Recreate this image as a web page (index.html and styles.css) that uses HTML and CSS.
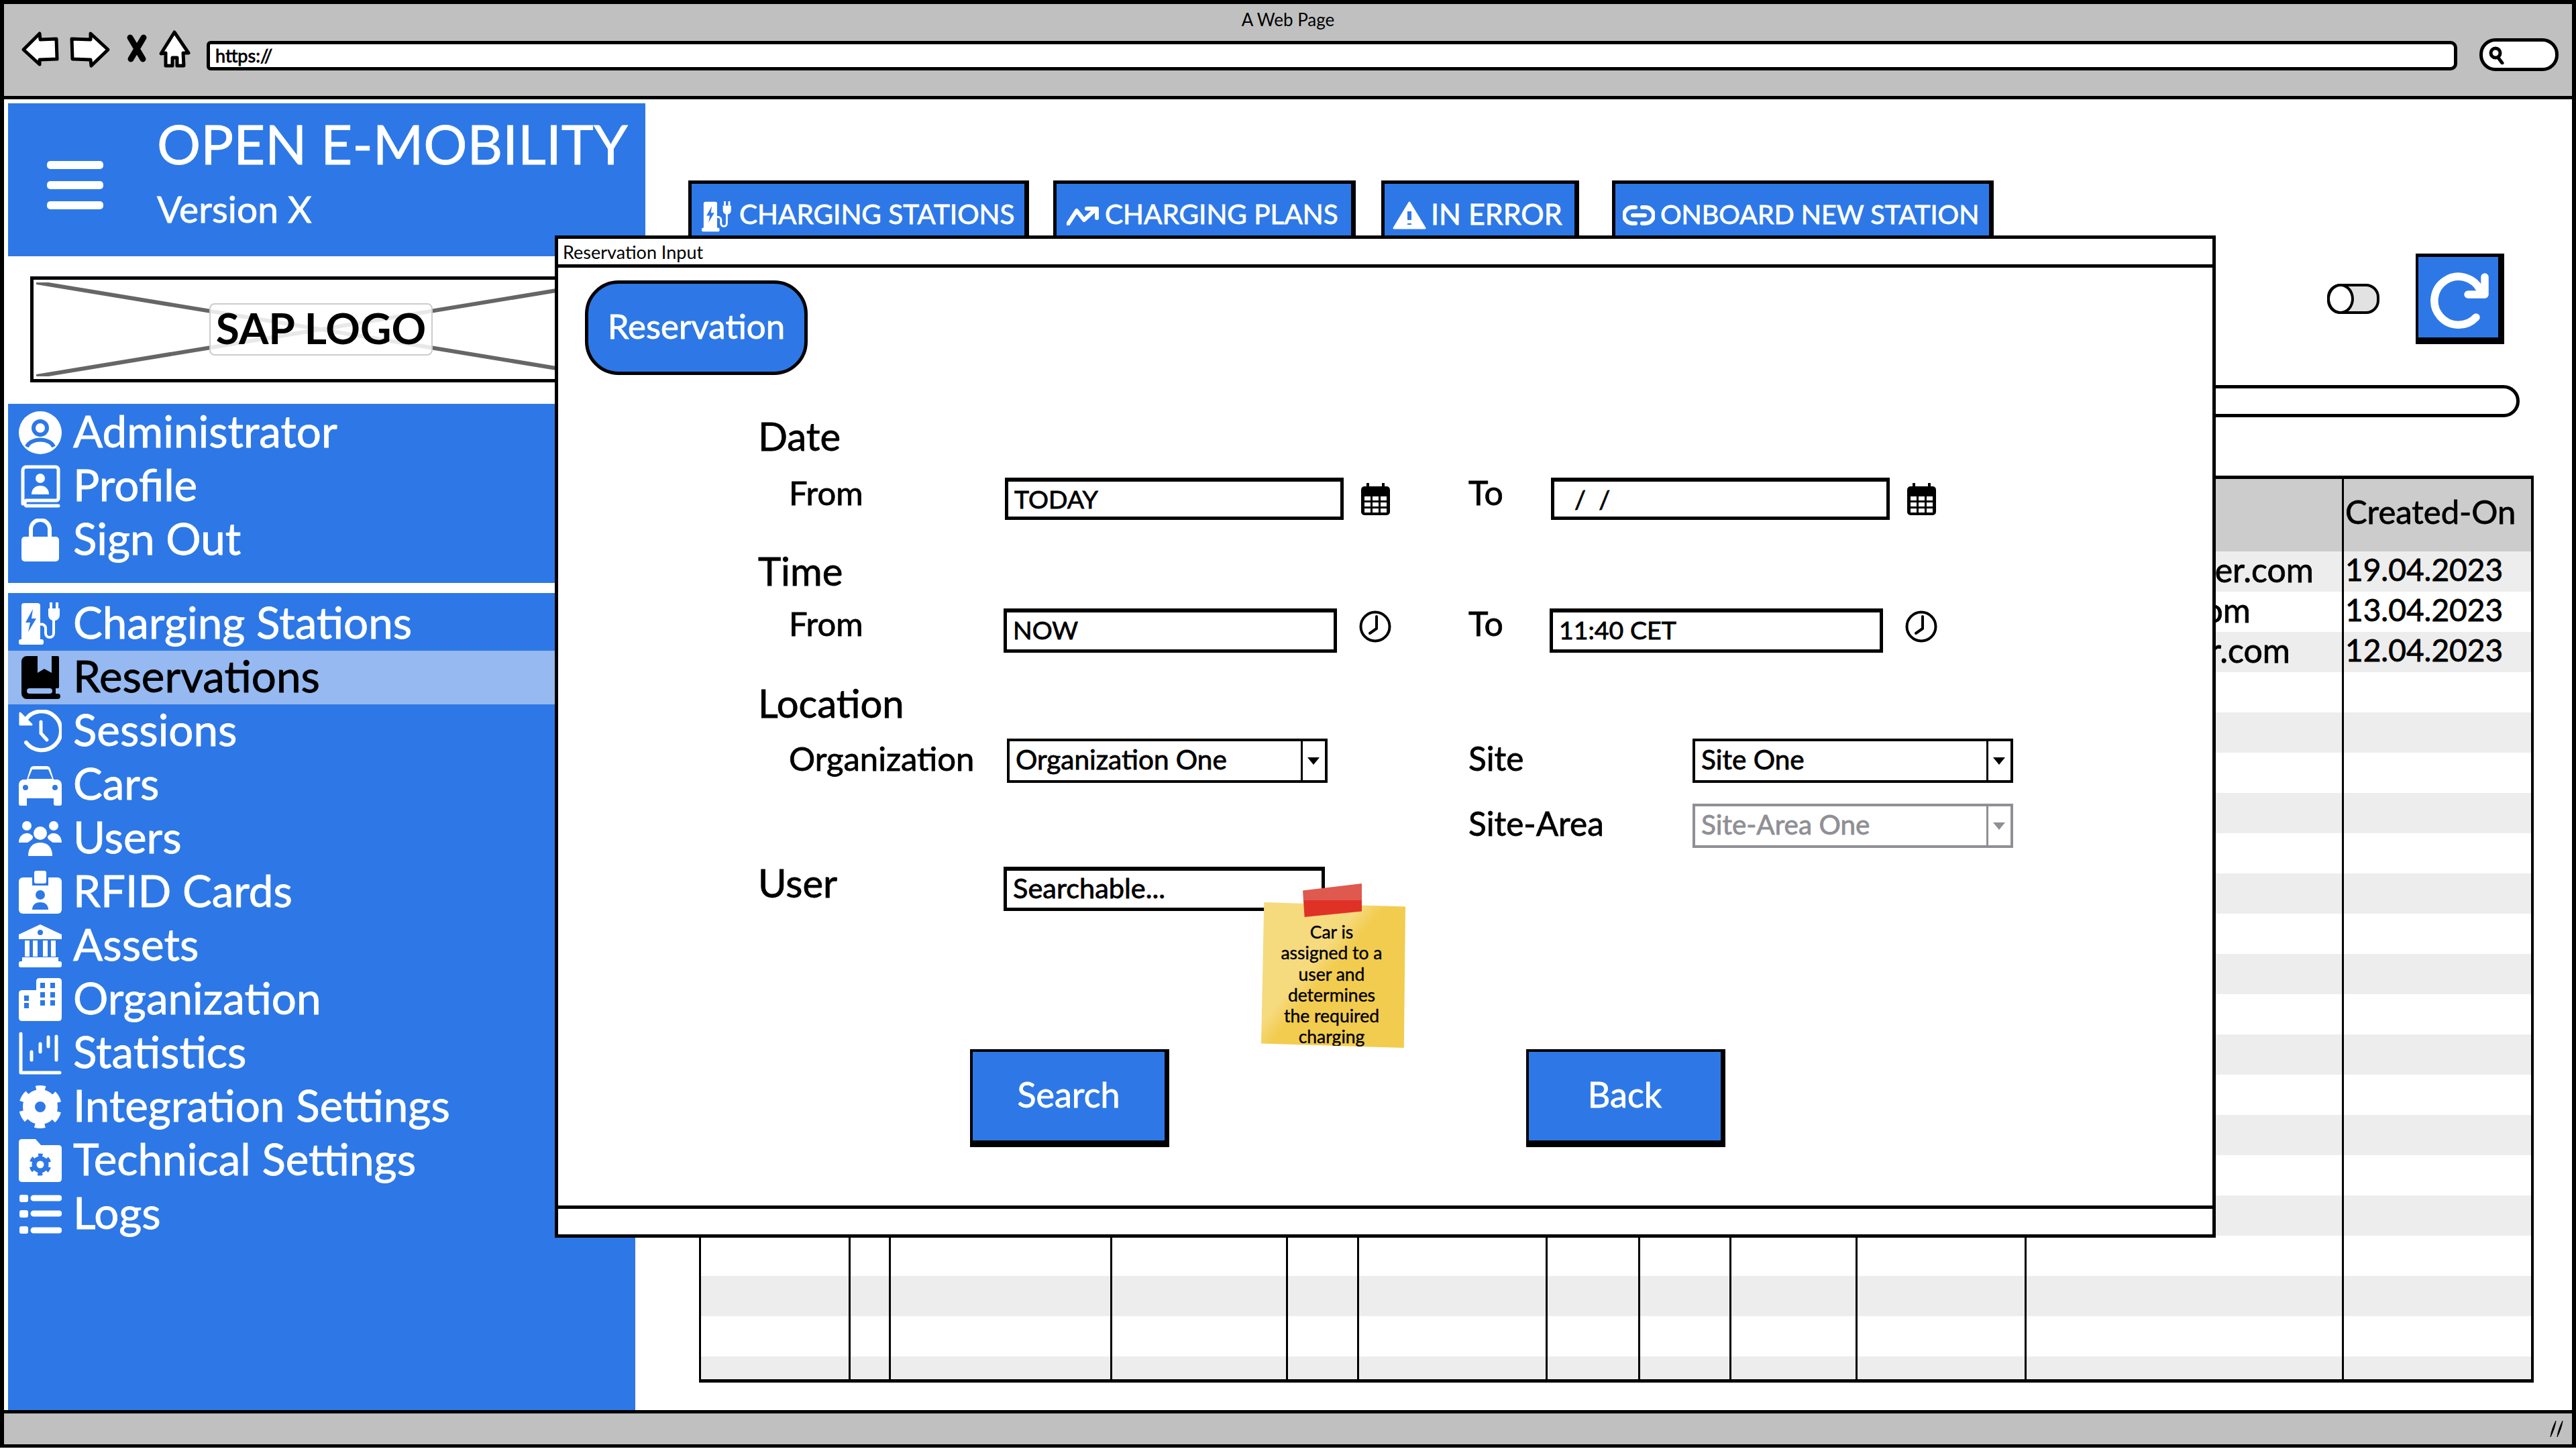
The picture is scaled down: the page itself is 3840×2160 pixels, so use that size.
FILE: index.html
```html
<!DOCTYPE html>
<html lang="en">
<head>
    <meta charset="UTF-8">
    <title>Reservation Input</title>
    <link rel="stylesheet" href="styles.css">
</head>
<body>
    <svg class="icon-defs" aria-hidden="true">
        <symbol id="i-user" viewBox="0 0 64 64">
            <circle cx="32" cy="32" r="32" fill="currentColor"/>
            <circle class="cut-line" cx="32" cy="25" r="10" stroke-width="6"/>
            <path class="cut-line" d="M12 53C18 39 46 39 52 53" stroke-width="6"/>
        </symbol>
        <symbol id="i-profile" viewBox="0 0 64 64">
            <path d="M11 3h44a4 4 0 0 1 4 4v43a3 3 0 0 1-3 3H11a5 5 0 0 0 0 8h48M6 58V8a5 5 0 0 1 5-5" fill="none" stroke="currentColor" stroke-width="5" stroke-linecap="round"/>
            <circle cx="32" cy="20" r="7" fill="currentColor"/>
            <path d="M19 44c0-9 6-13 13-13s13 4 13 13z" fill="currentColor"/>
        </symbol>
        <symbol id="i-lock" viewBox="0 0 64 64">
            <path d="M18 28V16a14 14 0 0 1 28 0v12" fill="none" stroke="currentColor" stroke-width="6"/>
            <rect x="4" y="27" width="56" height="37" rx="5" fill="currentColor"/>
        </symbol>
        <symbol id="i-station" viewBox="0 0 64 64">
            <path d="M8 1h20a4 4 0 0 1 4 4v51H4V5a4 4 0 0 1 4-4z" fill="currentColor"/>
            <rect x="0" y="55" width="37" height="8" rx="3" fill="currentColor"/>
            <path class="cut" d="M21 10L10 30h7l-3 14 12-20h-7z"/>
            <path d="M48 0v9M57 0v9" stroke="currentColor" stroke-width="4"/>
            <path d="M44 9h17v10a8 8 0 0 1-17 0z" fill="currentColor"/>
            <path d="M52 24v22a6 6 0 0 1-12 0v-8a6 6 0 0 0-8-5" fill="none" stroke="currentColor" stroke-width="4"/>
        </symbol>
        <symbol id="i-book" viewBox="0 0 64 64">
            <path d="M12 0H58a2 2 0 0 1 2 2V46a2 2 0 0 1-2 2H55V56H58a4 4 0 0 1 0 8H12A8 8 0 0 1 4 56V8A8 8 0 0 1 12 0z" fill="currentColor"/>
            <path class="cut-light" d="M28 0V25L38 19 49 25V0z"/>
            <rect class="cut-light" x="12" y="48" width="38" height="8" rx="4"/>
        </symbol>
        <symbol id="i-history" viewBox="0 0 64 64">
            <path d="M10 15A29 29 0 1 1 11 49" fill="none" stroke="currentColor" stroke-width="6" stroke-linecap="round"/>
            <path d="M2 5V22H19z" fill="currentColor" stroke="currentColor" stroke-width="3" stroke-linejoin="round"/>
            <path d="M33 18V35L42 45" fill="none" stroke="currentColor" stroke-width="5" stroke-linecap="round"/>
        </symbol>
        <symbol id="i-car" viewBox="0 0 64 64">
            <path d="M12 24L17 8Q18 4 23 4H41Q46 4 47 8L52 24H58Q64 26 64 32V52H52V60Q52 63 49 63H3Q0 63 0 60V32Q0 26 6 24z" fill="currentColor"/>
            <rect x="12" y="52" width="40" height="12" class="cut"/>
            <rect x="52" y="50" width="12" height="13" rx="3" fill="currentColor"/>
            <path class="cut" d="M14 23L20 9H44L50 23z"/>
            <circle class="cut" cx="10" cy="36" r="4"/>
            <circle class="cut" cx="54" cy="36" r="4"/>
        </symbol>
        <symbol id="i-users" viewBox="0 0 64 64">
            <circle cx="12" cy="13" r="7" fill="currentColor"/>
            <circle cx="52" cy="13" r="7" fill="currentColor"/>
            <circle cx="32" cy="24" r="10" fill="currentColor"/>
            <path d="M0 38C0 27 8 24 12 24 16 24 19 26 21 29 22 33 16 36 13 38z" fill="currentColor"/>
            <path d="M64 38C64 27 56 24 52 24 48 24 45 26 43 29 42 33 48 36 51 38z" fill="currentColor"/>
            <path d="M14 58C14 44 22 38 32 38S50 44 50 58z" fill="currentColor"/>
        </symbol>
        <symbol id="i-badge" viewBox="0 0 64 64">
            <rect x="0" y="10" width="64" height="54" rx="6" fill="currentColor"/>
            <rect class="cut" x="20" y="8" width="24" height="14"/>
            <rect x="23" y="0" width="18" height="19" rx="3" fill="currentColor"/>
            <circle class="cut" cx="32" cy="36" r="7"/>
            <path class="cut" d="M20 58C20 50 26 47 32 47S44 50 44 58z"/>
        </symbol>
        <symbol id="i-bank" viewBox="0 0 64 64">
            <path d="M32 0L64 15V22H0V15z" fill="currentColor"/>
            <circle class="cut" cx="32" cy="12" r="4"/>
            <path d="M9 24h7v24H9zM21 24h7v24h-7zM36 24h7v24h-7zM48 24h7v24h-7z" fill="currentColor"/>
            <rect x="5" y="49" width="54" height="6" fill="currentColor"/>
            <rect x="0" y="55" width="64" height="9" rx="3" fill="currentColor"/>
        </symbol>
        <symbol id="i-org" viewBox="0 0 64 64">
            <path d="M31 0H59Q64 0 64 5V59Q64 64 59 64H5Q0 64 0 59V23Q0 18 5 18H26V5Q26 0 31 0z" fill="currentColor"/>
            <path class="cut" d="M32 7h7v8h-7zM47 7h7v8h-7zM32 21h7v8h-7zM47 21h7v8h-7zM32 33h7v8h-7zM47 33h7v8h-7zM8 26h7v8H8zM8 37h7v8H8z"/>
        </symbol>
        <symbol id="i-stats" viewBox="0 0 64 64">
            <path d="M3 3V61H61" fill="none" stroke="currentColor" stroke-width="5" stroke-linecap="round" stroke-linejoin="round"/>
            <path d="M19 30V42M32 18V30M44 8V22M56 7V42" fill="none" stroke="currentColor" stroke-width="5" stroke-linecap="round"/>
        </symbol>
        <symbol id="i-gear" viewBox="0 0 64 64">
            <circle cx="32" cy="32" r="17" fill="none" stroke="currentColor" stroke-width="18"/>
            <circle cx="32" cy="32" r="26" fill="none" stroke="currentColor" stroke-width="12" stroke-dasharray="14 13.23" stroke-dashoffset="7" transform="rotate(-90 32 32)"/>
        </symbol>
        <symbol id="i-folder" viewBox="0 0 64 64">
            <path d="M5 0H25L33 9H59Q64 9 64 14V59Q64 64 59 64H5Q0 64 0 59V5Q0 0 5 0z" fill="currentColor"/>
            <circle class="cut-line" cx="32" cy="38" r="9" stroke-width="7"/>
            <circle class="cut-line" cx="32" cy="38" r="14" stroke-width="5" stroke-dasharray="7 7.66" stroke-dashoffset="3.5" transform="rotate(-90 32 38)"/>
        </symbol>
        <symbol id="i-list" viewBox="0 0 64 64">
            <path d="M4 3h7a3 3 0 0 1 3 3v5a3 3 0 0 1-3 3H4a3 3 0 0 1-3-3V6a3 3 0 0 1 3-3zM4 26h7a3 3 0 0 1 3 3v5a3 3 0 0 1-3 3H4a3 3 0 0 1-3-3v-5a3 3 0 0 1 3-3zM4 50h7a3 3 0 0 1 3 3v5a3 3 0 0 1-3 3H4a3 3 0 0 1-3-3v-5a3 3 0 0 1 3-3z" fill="currentColor"/>
            <path d="M22 8H60M22 31H60M22 56H60" stroke="currentColor" stroke-width="9" stroke-linecap="round"/>
        </symbol>
        <symbol id="i-calendar" viewBox="0 0 43 48">
            <path d="M10 1v8M33 1v8" stroke="currentColor" stroke-width="4" stroke-linecap="round"/>
            <rect x="0" y="5" width="43" height="43" rx="5" fill="currentColor"/>
            <path d="M5 20h9v6H5zM17 20h9v6h-9zM29 20h9v6h-9zM5 29h9v6H5zM17 29h9v6h-9zM29 29h9v6h-9zM5 38h9v6H5zM17 38h9v6h-9zM29 38h9v6h-9z" fill="#fff"/>
        </symbol>
        <symbol id="i-clock" viewBox="0 0 48 48">
            <circle cx="24" cy="24" r="21.5" fill="none" stroke="currentColor" stroke-width="4"/>
            <path d="M26 9V27L16 34" fill="none" stroke="currentColor" stroke-width="4" stroke-linecap="round" stroke-linejoin="round"/>
        </symbol>
    </svg>

    <div class="window">
        <header class="browser-bar">
            <div class="browser-title">A Web Page</div>
            <div class="browser-tools">
                <svg class="tool tool-back" viewBox="0 0 54 50"><path d="M3 26L27 2 28 11 52 10 53 40 27 41 27 48z"/></svg>
                <svg class="tool tool-forward" viewBox="0 0 58 50"><path d="M2 10L30 11 30 2 56 26 31 50 30 41 3 40z"/></svg>
                <svg class="tool tool-stop" viewBox="0 0 32 40"><path d="M6 4L25 36M26 4L7 36"/></svg>
                <svg class="tool tool-home" viewBox="0 0 45 54"><path d="M22 2L43 33 35 33 36 52 26 52 26 40 19 40 19 52 9 52 9 33 2 34z"/></svg>
                <div class="url-bar">https://</div>
                <div class="search-pill">
                    <svg class="search-glass" viewBox="0 0 24 28"><circle cx="10" cy="11" r="7"/><path d="M14 18L20 26"/></svg>
                </div>
            </div>
        </header>

        <div class="page">
            <aside class="side">
                <div class="brand">
                    <div class="burger"><span></span><span></span><span></span></div>
                    <div class="brand-text">
                        <div class="brand-name">OPEN E-MOBILITY</div>
                        <div class="brand-version">Version X</div>
                    </div>
                </div>

                <div class="logo-box">
                    <svg class="logo-cross" viewBox="0 0 848 140" preserveAspectRatio="none"><path d="M0 0L848 140M0 140L848 0"/></svg>
                    <span class="logo-label">SAP LOGO</span>
                </div>

                <nav class="menu menu-user">
                    <a class="menu-item"><svg class="menu-icon"><use href="#i-user"/></svg>Administrator</a>
                    <a class="menu-item"><svg class="menu-icon"><use href="#i-profile"/></svg>Profile</a>
                    <a class="menu-item"><svg class="menu-icon"><use href="#i-lock"/></svg>Sign Out</a>
                </nav>

                <nav class="menu menu-main">
                    <a class="menu-item"><svg class="menu-icon"><use href="#i-station"/></svg>Charging Stations</a>
                    <a class="menu-item active"><svg class="menu-icon"><use href="#i-book"/></svg>Reservations</a>
                    <a class="menu-item"><svg class="menu-icon"><use href="#i-history"/></svg>Sessions</a>
                    <a class="menu-item"><svg class="menu-icon"><use href="#i-car"/></svg>Cars</a>
                    <a class="menu-item"><svg class="menu-icon"><use href="#i-users"/></svg>Users</a>
                    <a class="menu-item"><svg class="menu-icon"><use href="#i-badge"/></svg>RFID Cards</a>
                    <a class="menu-item"><svg class="menu-icon"><use href="#i-bank"/></svg>Assets</a>
                    <a class="menu-item"><svg class="menu-icon"><use href="#i-org"/></svg>Organization</a>
                    <a class="menu-item"><svg class="menu-icon"><use href="#i-stats"/></svg>Statistics</a>
                    <a class="menu-item"><svg class="menu-icon"><use href="#i-gear"/></svg>Integration Settings</a>
                    <a class="menu-item"><svg class="menu-icon"><use href="#i-folder"/></svg>Technical Settings</a>
                    <a class="menu-item"><svg class="menu-icon"><use href="#i-list"/></svg>Logs</a>
                </nav>
            </aside>

            <main class="content">
                <div class="tabs">
                    <a class="tab tab-stations"><svg class="tab-icon"><use href="#i-station"/></svg>CHARGING STATIONS</a>
                    <a class="tab tab-plans">
                        <svg class="tab-icon-trend" viewBox="0 0 48 28"><path d="M2 26L15 6 26 20 44 3"/><path d="M30 3H45V17"/></svg>CHARGING PLANS</a>
                    <a class="tab tab-error">
                        <svg class="tab-icon-warn" viewBox="0 0 50 42"><path class="warn-shape" d="M25 2L48 40H2z"/><path class="warn-mark" d="M25 15V28M25 33V35"/></svg>IN ERROR</a>
                    <a class="tab tab-onboard">
                        <svg class="tab-icon-link" viewBox="0 0 48 32"><path d="M19 4H14A12 12 0 0 0 14 28H19M29 4H34A12 12 0 0 1 34 28H29M15 16H33"/></svg>ONBOARD NEW STATION</a>
                </div>

                <div class="actions">
                    <div class="toggle"><span class="toggle-knob"></span></div>
                    <button class="refresh">
                        <svg viewBox="0 0 100 92"><path d="M72 69A36 36 0 1 1 78 28"/><path d="M85 9V35H60"/></svg>
                    </button>
                </div>

                <div class="table-search"></div>

                <div class="table">
                    <div class="col col-a"></div>
                    <div class="col col-b"></div>
                    <div class="col col-c"></div>
                    <div class="col col-d"></div>
                    <div class="col col-e"></div>
                    <div class="col col-f"></div>
                    <div class="col col-g"></div>
                    <div class="col col-h"></div>
                    <div class="col col-i"></div>
                    <div class="col col-j"></div>
                    <div class="col col-mail">
                        <div class="col-head"></div>
                        <div class="cell cell-mail-a">er.com</div>
                        <div class="cell cell-mail-b">om</div>
                        <div class="cell cell-mail-c">r.com</div>
                    </div>
                    <div class="col col-date">
                        <div class="col-head">Created-On</div>
                        <div class="cell">19.04.2023</div>
                        <div class="cell">13.04.2023</div>
                        <div class="cell">12.04.2023</div>
                    </div>
                </div>
            </main>

            <section class="dialog">
                <div class="dialog-title">Reservation Input</div>
                <div class="dialog-body">
                    <div class="chip">Reservation</div>

                    <form class="form">
                        <h2 class="form-heading">Date</h2>
                        <div class="form-row">
                            <label class="row-label">From</label>
                            <div class="input date-input">TODAY</div>
                            <svg class="picker calendar"><use href="#i-calendar"/></svg>
                            <label class="to-label">To</label>
                            <div class="input date-input input-blank">/&nbsp;&nbsp;/</div>
                            <svg class="picker calendar"><use href="#i-calendar"/></svg>
                        </div>

                        <h2 class="form-heading heading-time">Time</h2>
                        <div class="form-row row-time">
                            <label class="row-label">From</label>
                            <div class="input time-input">NOW</div>
                            <svg class="picker clock"><use href="#i-clock"/></svg>
                            <label class="to-label">To</label>
                            <div class="input time-input">11:40 CET</div>
                            <svg class="picker clock"><use href="#i-clock"/></svg>
                        </div>

                        <h2 class="form-heading heading-location">Location</h2>
                        <div class="form-row row-location">
                            <label class="row-label select-label">Organization</label>
                            <div class="select select-org"><span>Organization One</span><i class="select-arrow"></i></div>
                            <label class="site-label select-label">Site</label>
                            <div class="select"><span>Site One</span><i class="select-arrow"></i></div>
                        </div>
                        <div class="form-row row-area">
                            <label class="site-label select-label">Site-Area</label>
                            <div class="select disabled"><span>Site-Area One</span><i class="select-arrow"></i></div>
                        </div>

                        <div class="form-row row-user">
                            <h2 class="form-heading user-heading">User</h2>
                            <div class="input user-input">Searchable...</div>
                        </div>

                        <div class="form-buttons">
                            <button type="button" class="btn">Search</button>
                            <button type="button" class="btn">Back</button>
                        </div>
                    </form>

                    <div class="note">
                        <div class="note-paper">Car is<br>assigned to a<br>user and<br>determines<br>the required<br>charging</div>
                        <div class="note-tape"></div>
                    </div>
                </div>
                <div class="dialog-footer"></div>
            </section>
        </div>

        <footer class="status-bar">
            <svg class="grip" viewBox="0 0 24 28"><path d="M10 2C6 10 3 18 2 26C6 18 9 10 10 2zM20 2C16 10 13 18 12 26C16 18 19 10 20 2z"/></svg>
        </footer>
    </div>
</body>
</html>
```

FILE: styles.css
```css
* {
    box-sizing: border-box;
}

body {
    margin: 0;
    background-color: white;
    font-family: Lato, "Open Sans", sans-serif;
    color: black;
    -webkit-text-stroke: 0.8px currentColor;
}

.icon-defs {
    display: none;
}

.cut {
    fill: #2d78e6;
}

.cut-line {
    fill: none;
    stroke: #2d78e6;
}

.cut-light {
    fill: #95b9f0;
}

.window {
    display: flex;
    flex-direction: column;
    width: 3840px;
    height: 2158px;
    border-style: solid;
    border-color: black;
    border-width: 6px 6px 5px 6px;
}

/* browser chrome */
.browser-bar {
    height: 142px;
    background-color: #c0c0c0;
    border-bottom: 5px solid black;
    flex-shrink: 0;
}

.browser-title {
    height: 40px;
    line-height: 46px;
    text-align: center;
    font-size: 26px;
    -webkit-text-stroke: 0;
}

.browser-tools {
    display: flex;
    align-items: flex-start;
    padding-left: 26px;
}

.tool {
    flex-shrink: 0;
    overflow: visible;
}

.tool path {
    fill: white;
    stroke: black;
    stroke-width: 5;
    stroke-linejoin: round;
}

.tool-back {
    width: 54px;
    height: 50px;
    margin-top: 2px;
}

.tool-forward {
    width: 58px;
    height: 50px;
    margin-top: 2px;
    margin-left: 19px;
}

.tool-stop {
    width: 32px;
    height: 40px;
    margin-top: 6px;
    margin-left: 25px;
}

.tool-stop path {
    fill: none;
    stroke-width: 9;
    stroke-linecap: round;
}

.tool-home {
    width: 45px;
    height: 54px;
    margin-left: 18px;
}

.url-bar {
    width: 3355px;
    height: 44px;
    margin-top: 15px;
    margin-left: 25px;
    padding-left: 8px;
    line-height: 34px;
    font-size: 27px;
    background-color: white;
    border: 5px solid black;
    border-radius: 6px 10px 10px 6px;
}

.search-pill {
    width: 118px;
    height: 49px;
    margin-top: 11px;
    margin-left: 33px;
    padding-left: 7px;
    background-color: white;
    border: 5px solid black;
    border-radius: 24px;
}

.search-glass {
    display: block;
    width: 24px;
    height: 28px;
    margin-top: 6px;
    margin-left: 2px;
}

.search-glass circle,
.search-glass path {
    fill: none;
    stroke: black;
    stroke-width: 5;
    stroke-linecap: round;
}

/* page area */
.page {
    position: relative;
    display: flex;
    height: 1954px;
    flex-shrink: 0;
}

.side {
    display: flex;
    flex-direction: column;
    width: 956px;
    padding: 6px 0 0 6px;
    flex-shrink: 0;
}

.brand {
    display: flex;
    height: 228px;
    flex-shrink: 0;
    background-color: #2d78e6;
    color: white;
}

.burger {
    display: flex;
    flex-direction: column;
    gap: 18px;
    width: 84px;
    margin-top: 86px;
    margin-left: 58px;
}

.burger span {
    display: block;
    height: 12px;
    border-radius: 5px;
    background-color: white;
}

.brand-text {
    margin-left: 80px;
}

.brand-name {
    margin-top: 12px;
    font-size: 81.5px;
    line-height: 96px;
    white-space: nowrap;
}

.brand-version {
    margin-top: 14px;
    font-size: 55px;
    line-height: 70px;
}

.logo-box {
    position: relative;
    display: flex;
    align-items: center;
    justify-content: center;
    width: 867px;
    height: 158px;
    flex-shrink: 0;
    margin-top: 30px;
    margin-left: 33px;
    border: 5px solid black;
}

.logo-cross {
    position: absolute;
    left: 4px;
    top: 4px;
    width: 848px;
    height: 140px;
}

.logo-cross path {
    fill: none;
    stroke: #666;
    stroke-width: 6;
}

.logo-label {
    position: relative;
    width: 333px;
    height: 78px;
    margin-top: -1px;
    text-align: center;
    line-height: 70px;
    font-size: 64px;
    font-weight: 700;
    -webkit-text-stroke: 0;
    background-color: rgba(255, 255, 255, 0.85);
    border: 2px solid #ccc;
    border-radius: 8px;
    white-space: nowrap;
}

.menu {
    width: 935px;
    flex-shrink: 0;
    background-color: #2d78e6;
    color: white;
}

.menu-user {
    height: 267px;
    margin-top: 32px;
    padding-top: 3px;
}

.menu-main {
    flex: 1;
    margin-top: 15px;
    padding-top: 6px;
}

.menu-item {
    display: flex;
    align-items: flex-start;
    gap: 17px;
    height: 80px;
    padding-left: 16px;
    line-height: 74px;
    font-size: 65.5px;
    white-space: nowrap;
}

.menu-item.active {
    background-color: #95b9f0;
    color: black;
}

.menu-icon {
    width: 64px;
    height: 64px;
    margin-top: 8px;
    flex-shrink: 0;
}

/* main content behind the dialog */
.content {
    flex: 1;
    min-width: 0;
    padding-left: 64px;
    padding-right: 57px;
}

.tabs {
    display: flex;
    margin-top: 121px;
    gap: 36px;
}

.tab {
    display: flex;
    align-items: flex-start;
    flex-shrink: 0;
    height: 95px;
    padding-top: 21px;
    color: white;
    background-color: #2d78e6;
    border-style: solid;
    border-color: black;
    border-width: 5px 7px 0 5px;
    font-size: 40.5px;
    line-height: 48px;
    white-space: nowrap;
}

.tab svg {
    flex-shrink: 0;
}

.tab-stations {
    width: 508px;
    padding-left: 15px;
}

.tab-plans {
    width: 451px;
    padding-left: 15px;
}

.tab-error {
    width: 295px;
    margin-left: 2px;
    padding-left: 12px;
    font-size: 43px;
}

.tab-onboard {
    width: 569px;
    margin-left: 13px;
    padding-left: 11px;
    font-size: 39.5px;
}

.tab-icon {
    width: 46px;
    height: 46px;
    margin-top: 5px;
    margin-right: 10px;
}

.tab-icon-trend {
    width: 48px;
    height: 28px;
    margin-top: 13px;
    margin-right: 9px;
}

.tab-icon-trend path,
.tab-icon-link path {
    fill: none;
    stroke: white;
    stroke-width: 6;
    stroke-linecap: round;
    stroke-linejoin: round;
}

.tab-icon-warn {
    width: 50px;
    height: 42px;
    margin-top: 5px;
    margin-right: 7px;
}

.warn-shape {
    fill: white;
    stroke: white;
    stroke-width: 3;
    stroke-linejoin: round;
}

.warn-mark {
    fill: none;
    stroke: #2d78e6;
    stroke-width: 6;
}

.tab-icon-link {
    width: 48px;
    height: 32px;
    margin-top: 10px;
    margin-right: 8px;
}

.actions {
    display: flex;
    align-items: center;
    justify-content: flex-end;
    gap: 54px;
    margin-top: 14px;
    padding-right: 44px;
}

.toggle {
    position: relative;
    width: 78px;
    height: 45px;
    background-color: #e2e2e2;
    border: 4px solid black;
    border-radius: 20px;
}

.toggle-knob {
    position: absolute;
    left: -4px;
    top: -4px;
    width: 40px;
    height: 45px;
    background-color: white;
    border: 4px solid black;
    border-radius: 50%;
}

.refresh {
    width: 132px;
    height: 135px;
    padding: 14px 0 0 14px;
    background-color: #2d78e6;
    border-style: solid;
    border-color: black;
    border-width: 5px 9px 10px 4px;
}

.refresh svg {
    display: block;
    width: 100px;
    height: 92px;
}

.refresh path {
    fill: none;
    stroke: white;
    stroke-width: 11.5;
    stroke-linecap: round;
    stroke-linejoin: round;
}

.table-search {
    height: 48px;
    width: 1000px;
    margin-top: 61px;
    margin-left: auto;
    margin-right: 21px;
    border: 5px solid black;
    border-radius: 24px;
}

.table {
    display: flex;
    height: 1352px;
    margin-top: 87px;
    margin-left: 16px;
    overflow: hidden;
    border-style: solid;
    border-color: black;
    border-width: 5px 4px 5px 3px;
    background-image:
        linear-gradient(#cccccc, #cccccc),
        linear-gradient(#ededed 50%, white 50%);
    background-size: 100% 108px, 100% 120px;
    background-position: 0 0, 0 108px;
    background-repeat: no-repeat, repeat-y;
}

.col {
    flex-shrink: 0;
    border-right: 3px solid black;
    font-size: 46px;
    white-space: nowrap;
}

.col-a { width: 223px; }
.col-b { width: 60px; }
.col-c { width: 330px; }
.col-d { width: 262px; }
.col-e { width: 106px; }
.col-f { width: 281px; }
.col-g { width: 138px; }
.col-h { width: 136px; }
.col-i { width: 188px; }
.col-j { width: 252px; }
.col-mail { width: 473px; font-size: 50px; }

.col-date {
    flex: 1;
    border-right: none;
    padding-left: 2px;
}

.col-head {
    height: 108px;
    padding-top: 18px;
    line-height: 60px;
    font-size: 49px;
}

.cell {
    height: 60px;
    line-height: 54px;
}

.col-mail .cell {
    text-align: right;
}

.cell-mail-a { padding-right: 42px; }
.cell-mail-b { padding-right: 136px; }
.cell-mail-c { padding-right: 77px; }

/* reservation dialog */
.dialog {
    position: absolute;
    left: 821px;
    top: 203px;
    display: flex;
    flex-direction: column;
    width: 2476px;
    height: 1494px;
    background-color: white;
    border: 5px solid black;
}

.dialog-title {
    height: 43px;
    padding-left: 7px;
    line-height: 40px;
    font-size: 27px;
    -webkit-text-stroke: 0;
    border-bottom: 5px solid black;
    flex-shrink: 0;
}

.dialog-body {
    position: relative;
    flex: 1;
    min-height: 0;
}

.dialog-footer {
    height: 43px;
    border-top: 5px solid black;
    flex-shrink: 0;
}

.chip {
    width: 332px;
    height: 141px;
    margin-top: 19px;
    margin-left: 40px;
    text-align: center;
    line-height: 126px;
    font-size: 51px;
    color: white;
    background-color: #2d78e6;
    border: 5px solid black;
    border-radius: 50px;
}

.form {
    margin-left: 301px;
    margin-top: 62px;
}

.form-heading {
    margin: 0 0 0 -3px;
    height: 60px;
    line-height: 58px;
    font-size: 58px;
    font-weight: 400;
}

.heading-time {
    margin-top: 47px;
}

.heading-location {
    margin-top: 46px;
}

.form-row {
    display: flex;
    align-items: flex-start;
    margin-top: 31px;
}

.row-time {
    margin-top: 25px;
}

.row-location {
    margin-top: 22px;
}

.row-area {
    margin-top: 31px;
    padding-left: 1056px;
}

.row-user {
    margin-top: 28px;
}

.row-label {
    width: 365px;
    padding-left: 43px;
    line-height: 44px;
    font-size: 49px;
}

.to-label {
    width: 123px;
    padding-left: 0;
    line-height: 44px;
    font-size: 50px;
}

.select-label {
    line-height: 58px;
}

.site-label {
    width: 331px;
    margin-left: 210px;
    font-size: 49.5px;
}

.row-area .site-label {
    margin-left: 0;
}

.input {
    height: 63px;
    padding-left: 9px;
    line-height: 52px;
    font-size: 37.5px;
    background-color: white;
    border: 5px solid black;
    border-top-width: 6px;
    flex-shrink: 0;
}

.date-input {
    width: 505px;
}

.time-input {
    width: 497px;
    height: 66px;
    margin-left: -2px;
}

.input-blank {
    padding-left: 30px;
}

.user-input {
    width: 479px;
    height: 66px;
    margin-left: 6px;
    line-height: 50px;
    font-size: 41.5px;
}

.user-heading {
    width: 360px;
    line-height: 48px;
}

.picker {
    flex-shrink: 0;
}

.calendar {
    width: 43px;
    height: 48px;
    margin-top: 8px;
    margin-left: 26px;
    margin-right: 117px;
}

.clock {
    width: 48px;
    height: 48px;
    margin-top: 3px;
    margin-left: 33px;
    margin-right: 115px;
}

.select {
    display: flex;
    width: 478px;
    height: 66px;
    margin-left: 3px;
    line-height: 54px;
    font-size: 40.5px;
    background-color: white;
    border: 4px solid black;
    flex-shrink: 0;
}

.select span {
    flex: 1;
    padding-left: 9px;
    white-space: nowrap;
}

.select-arrow {
    position: relative;
    width: 36px;
    border-left: 3px solid black;
}

.select-arrow::after {
    content: "";
    position: absolute;
    left: 7px;
    top: 24px;
    border-left: 9px solid transparent;
    border-right: 9px solid transparent;
    border-top: 11px solid black;
}

.select.disabled {
    color: #8f8f94;
    border-color: #8f8f94;
}

.select.disabled .select-arrow {
    border-left-color: #8f8f94;
}

.select.disabled .select-arrow::after {
    border-top-color: #8f8f94;
}

.form-buttons {
    display: flex;
    gap: 532px;
    margin-top: 206px;
    margin-left: 313px;
}

.btn {
    width: 297px;
    height: 146px;
    padding: 0 0 6px;
    color: white;
    background-color: #2d78e6;
    font-family: inherit;
    font-size: 52px;
    border-style: solid;
    border-color: black;
    border-width: 4px 7px 10px 4px;
}

/* sticky note on top of the user field */
.note {
    position: absolute;
    left: 1048px;
    top: 918px;
    width: 215px;
    height: 245px;
}

.note-paper {
    position: absolute;
    left: 0;
    top: 28px;
    width: 215px;
    height: 217px;
    padding-top: 29px;
    padding-right: 5px;
    text-align: center;
    font-size: 26.5px;
    line-height: 31.3px;
    -webkit-text-stroke: 0.4px currentColor;
    background: linear-gradient(130deg, #f6da7e 0 38%, #f2cc4f 48%);
    clip-path: polygon(2% 0, 100% 3%, 99% 100%, 0 97%);
}

.note-tape {
    position: absolute;
    left: 62px;
    top: 0;
    width: 88px;
    height: 50px;
    background: linear-gradient(#e0594f 0 50%, #e03127 50%);
    clip-path: polygon(0 21%, 100% 0, 100% 83%, 3% 100%);
}

/* status bar */
.status-bar {
    display: flex;
    align-items: center;
    justify-content: flex-end;
    height: 51px;
    flex-shrink: 0;
    padding-right: 10px;
    background-color: #c0c0c0;
    border-top: 5px solid black;
}

.grip {
    width: 24px;
    height: 28px;
}

.grip path {
    fill: black;
    stroke: black;
    stroke-width: 1;
}
```
